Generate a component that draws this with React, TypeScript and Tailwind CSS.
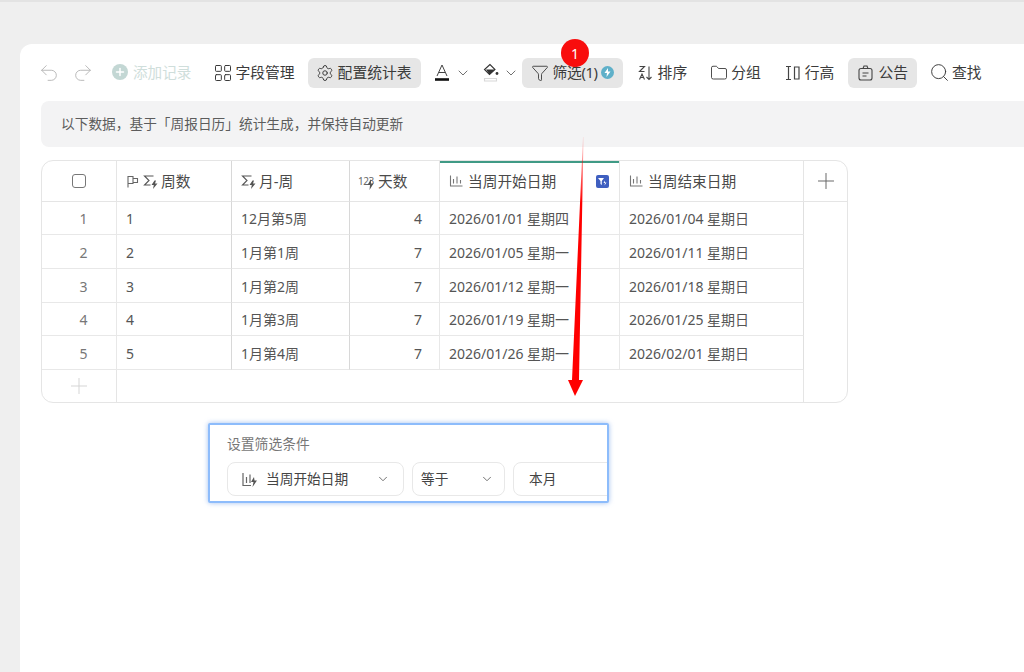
import { ChevronDown, Funnel, Folder, LayoutGrid, Plus, Redo2, Search, Settings, Undo2 } from "lucide-react";
import type { ReactNode } from "react";

const rows = [
  { id: 1, month: "12月第5周", days: 4, start: "2026/01/01 星期四", end: "2026/01/04 星期日" },
  { id: 2, month: "1月第1周", days: 7, start: "2026/01/05 星期一", end: "2026/01/11 星期日" },
  { id: 3, month: "1月第2周", days: 7, start: "2026/01/12 星期一", end: "2026/01/18 星期日" },
  { id: 4, month: "1月第3周", days: 7, start: "2026/01/19 星期一", end: "2026/01/25 星期日" },
  { id: 5, month: "1月第4周", days: 7, start: "2026/01/26 星期一", end: "2026/02/01 星期日" },
];

const SigmaBolt = () => (
  <svg className="shrink-0" width="15" height="15" viewBox="0 0 15 15" fill="none" stroke="#555" strokeWidth="1.1">
    <path d="M10.5 2H1.5L6 6.5 1.5 11H7.5" />
    <path d="M11.5 6.5 8.5 11h2.3L10 15 14.5 9.5H12l1-3z" fill="#555" stroke="none" />
  </svg>
);

const ChartIcon = () => (
  <svg className="shrink-0" width="14" height="14" viewBox="0 0 14 14" fill="none" stroke="#777" strokeWidth="1.1">
    <path d="M1.5 1.5v10.5h12M4.5 5v4.5M8 2.5v7M11.5 6v3.5" />
  </svg>
);

const IconBox = ({ children }: { children: ReactNode }) => (
  <span className="flex w-[15px] shrink-0 justify-center">{children}</span>
);

const ToolItem = ({ icon, label, active, className = "" }: { icon: ReactNode; label: ReactNode; active?: boolean; className?: string }) => (
  <div className={`flex h-[30px] shrink-0 items-center gap-[5px] whitespace-nowrap rounded-md pl-[10px] pr-[9px] text-[14.8px] text-[#3b3b3b] ${active ? "bg-[#e6e6e6]" : ""} ${className}`}>
    <IconBox>{icon}</IconBox>
    <span>{label}</span>
  </div>
);

const HeaderCell = ({ children, className = "" }: { children: ReactNode; className?: string }) => (
  <div className={`flex items-center border-b border-r border-[#e5e5e5] text-[14.7px] text-[#4a4a4a] ${className}`}>{children}</div>
);

const BodyCell = ({ children, className = "" }: { children: ReactNode; className?: string }) => (
  <div className={`flex items-center border-b border-r border-[#e8e8e8] pl-[9px] pt-px text-[14px] text-[#555] ${className}`}>{children}</div>
);

export default function App() {
  return (
    <div className="relative h-[672px] w-[1024px] overflow-hidden border-t-2 border-[#e3e3e3] bg-[#efefef] pt-[42px] pl-5 font-['Noto_Sans','Noto_Sans_CJK_SC',sans-serif]">
      <div className="h-[640px] rounded-tl-xl bg-white pl-[21px]">
        {/* toolbar */}
        <div className="flex h-[57px] items-center">
          <Undo2 size={22} strokeWidth={1} className="-ml-[3px] shrink-0 text-[#b4b4b4]" />
          <Redo2 size={22} strokeWidth={1} className="ml-[12px] shrink-0 text-[#b4b4b4]" />
          <div className="ml-[18px] flex items-center gap-[5px] text-[14.6px] text-[#cfdedb]">
            <span className="flex h-4 w-4 items-center justify-center rounded-full bg-[#c3d7d4]">
              <Plus size={12} strokeWidth={3} className="text-white" />
            </span>
            添加记录
          </div>
          <ToolItem className="ml-[14px]" icon={<LayoutGrid size={20} strokeWidth={1.2} className="shrink-0" />} label="字段管理" />
          <ToolItem className="ml-[4px] w-[113px] pr-0" active icon={<Settings size={18} strokeWidth={1.3} className="shrink-0" />} label="配置统计表" />
          <svg className="ml-[13px] shrink-0" width="16" height="20" viewBox="0 0 16 20" fill="none" stroke="#444" strokeWidth="1">
            <path d="M3 13 8 2l5 11M5 9.5h6" />
            <path d="M1 16.5h14" stroke="#111" strokeWidth="2.6" />
          </svg>
          <ChevronDown size={16} strokeWidth={1.4} className="ml-[5px] shrink-0 text-[#666]" />
          <svg className="ml-[12px] shrink-0" width="16" height="20" viewBox="0 0 16 20" fill="none" stroke="#333" strokeWidth="1.1">
            <path d="M7 1.5 1.5 6.5 6.5 11.5 12 6.5z" />
            <path d="M3 6.5h9L6.5 11.5z" fill="#333" stroke="none" />
            <circle cx="14" cy="10.5" r="1.4" fill="#333" stroke="none" />
            <path d="M1.5 15.5h12v2.5h-12z" stroke="#d8d8d8" />
          </svg>
          <ChevronDown size={16} strokeWidth={1.4} className="ml-[4px] shrink-0 text-[#666]" />
          <div className="ml-[3px] flex h-[30px] w-[101px] shrink-0 items-center whitespace-nowrap rounded-md bg-[#e6e6e6] pl-[11px] text-[14.8px] text-[#3b3b3b]">
            <IconBox>
              <Funnel size={18} strokeWidth={1.2} className="shrink-0" />
            </IconBox>
            <span className="ml-[5px] w-[46px] tracking-[-0.4px]">筛选(1)</span>
            <span className="ml-[2px] flex h-[13px] w-[13px] shrink-0 items-center justify-center rounded-full bg-[#5fb0c9]">
              <svg width="7" height="9" viewBox="0 0 7 9" fill="#fff">
                <path d="M4 0 .5 5H3L2.5 9 6.5 3.5H4z" />
              </svg>
            </span>
          </div>
          <ToolItem
            className="ml-[5px]"
            icon={
              <svg className="shrink-0" width="15" height="16" viewBox="0 0 15 16" fill="none" stroke="#444" strokeWidth="1.1">
                <path d="M1.5 1.5h5L1.5 6.5h5M1.5 14.5 4 9l2.5 5.5M2.5 12.5h3M11 1.5v13M8.5 12l2.5 2.5 2.5-2.5" />
              </svg>
            }
            label="排序"
          />
          <ToolItem className="ml-[5px]" icon={<Folder size={18} strokeWidth={1.2} className="shrink-0" />} label="分组" />
          <ToolItem
            className="ml-[5px]"
            icon={
              <svg className="shrink-0" width="15" height="16" viewBox="0 0 15 16" fill="none" stroke="#444" strokeWidth="1.2">
                <path d="M1 1.5h5M1 14.5h5M3.5 1.5v13M9.5 2h4.5v12H9.5z" />
              </svg>
            }
            label="行高"
          />
          <ToolItem
            className="ml-[5px]"
            active
            icon={
              <svg className="shrink-0" width="15" height="16" viewBox="0 0 15 16" fill="none" stroke="#444" strokeWidth="1.1">
                <rect x="1" y="3.5" width="13" height="11.5" rx="2" />
                <path d="M5 3.5 6 1h3l1 2.5M4.5 8h6M4.5 11h4" />
              </svg>
            }
            label="公告"
          />
          <ToolItem className="ml-[5px]" icon={<Search size={21} strokeWidth={1.1} className="shrink-0" />} label="查找" />
        </div>

        {/* notice */}
        <div className="flex h-[46px] items-center rounded-l-lg bg-[#f3f3f4] pl-5 text-[13.7px] text-[#5c5c5c]">
          以下数据，基于「周报日历」统计生成，并保持自动更新
        </div>

        {/* table */}
        <div className="mt-[13px] grid w-[807px] grid-cols-[75px_115px_118px_90px_180px_184px_44px] grid-rows-[41px_33px_34px_34px_33px_34px_32px] overflow-hidden rounded-xl border border-[#e5e5e5]">
          <HeaderCell className="justify-center">
            <span className="h-[14px] w-[14px] rounded-[3px] border border-[#777]" />
          </HeaderCell>
          <HeaderCell className="gap-[4px] border-r-[#d8d8d8] pl-[9px]">
            <svg className="shrink-0" width="13" height="13" viewBox="0 0 13 13" fill="none" stroke="#666" strokeWidth="1.1">
              <path d="M2 12.5V1.5h5v7H2M7 3.5h4.5v4H7" />
            </svg>
            <SigmaBolt />
            <span className="-ml-[1px]">周数</span>
          </HeaderCell>
          <HeaderCell className="gap-[3px] border-r-[#d8d8d8] pl-[9px]">
            <SigmaBolt />
            月-周
          </HeaderCell>
          <HeaderCell className="pl-[8px]">
            <span className="relative w-[20px] text-[10px] leading-none tracking-[-0.5px] text-[#666]">
              123
              <svg className="absolute top-[3px] left-[9px]" width="7" height="11" viewBox="0 0 7 11" fill="#555">
                <path d="M4 0 .5 6H3L2.5 11 6.5 4.5H4z" />
              </svg>
            </span>
            <span>天数</span>
          </HeaderCell>
          <HeaderCell className="relative justify-between pl-[9px] pr-[10px]">
            <span className="absolute top-0 left-0 h-[2px] w-full bg-[#3f9a85]" />
            <span className="flex items-center gap-[5px]">
              <ChartIcon />
              当周开始日期
            </span>
            <span className="flex h-[13px] w-[13px] items-center justify-center rounded-[2px] bg-[#3f5fc0]">
              <svg width="9" height="9" viewBox="0 0 9 9" fill="#fff">
                <path d="M0 1h6L3.8 4v4L2.5 7V4zM7 3.5 5.5 6H7l-.5 2.5L8.5 5.5H7z" />
              </svg>
            </span>
          </HeaderCell>
          <HeaderCell className="gap-[5px] pl-[9px]">
            <ChartIcon />
            当周结束日期
          </HeaderCell>
          <HeaderCell className="justify-center border-r-0">
            <Plus size={26} strokeWidth={0.9} className="shrink-0 text-[#666]" />
          </HeaderCell>

          {rows.map((r) => (
            <div key={r.id} className="contents">
              <BodyCell className="justify-center pl-0 pt-0 text-[#777]">{r.id}</BodyCell>
              <BodyCell className="border-r-[#d8d8d8]">{r.id}</BodyCell>
              <BodyCell className="border-r-[#d8d8d8]">{r.month}</BodyCell>
              <BodyCell className="justify-end pr-[17px]">{r.days}</BodyCell>
              <BodyCell>{r.start}</BodyCell>
              <BodyCell className="border-r-[#e0e0e0]">{r.end}</BodyCell>
              {r.id === 1 && <div className="row-span-6" />}
            </div>
          ))}
          <div className="flex items-center justify-center border-r border-[#e5e5e5]">
            <Plus size={26} strokeWidth={0.9} className="shrink-0 text-[#d4d4d4]" />
          </div>
          <div className="col-span-5 border-r border-[#e5e5e5]" />
        </div>

        {/* filter panel */}
        <div className="ml-[167px] mt-5 h-[80px] w-[401px] overflow-hidden rounded-[2px] border-2 border-[#8dbcfb] bg-white pl-[17px] pt-[9px] shadow-[0_0_5px_rgba(100,150,230,0.6)]">
          <div className="text-[13.8px] leading-[20px] text-[#777]">设置筛选条件</div>
          <div className="mt-[8px] flex gap-2 text-[13.7px] text-[#444]">
            <div className="flex h-[34px] w-[177px] shrink-0 items-center rounded-lg border border-[#e8e8e8] pl-[13px]">
              <svg className="shrink-0" width="17" height="17" viewBox="0 0 17 17" fill="none" stroke="#666" strokeWidth="1.2">
                <path d="M2 2v12.5h8M5.5 6v6M9 3.5V12" />
                <path d="M13 6 10 11h2.5L11.5 16 16 9.5h-2.5z" fill="#555" stroke="none" />
              </svg>
              <span className="ml-[8px]">当周开始日期</span>
              <ChevronDown size={14} strokeWidth={1.4} className="ml-[28px] shrink-0 text-[#555]" />
            </div>
            <div className="flex h-[34px] w-[93px] shrink-0 items-center rounded-lg border border-[#e8e8e8] pl-[8px]">
              等于
              <ChevronDown size={14} strokeWidth={1.4} className="ml-[32px] shrink-0 text-[#555]" />
            </div>
            <div className="flex h-[34px] w-[120px] shrink-0 items-center rounded-lg border border-[#e8e8e8] pl-[15px]">本月</div>
          </div>
        </div>
      </div>

      {/* step badge */}
      <div className="absolute left-[561px] top-[37px] flex h-7 w-7 items-center justify-center rounded-full bg-[#f80d0d] text-[14px] text-white">1</div>

      {/* arrow */}
      <svg className="pointer-events-none absolute left-[560px] top-[134px]" width="30" height="262" viewBox="0 0 30 262">
        <defs>
          <linearGradient id="arrowFade" x1="0" y1="0" x2="0" y2="1">
            <stop offset="0" stopColor="#ff0000" stopOpacity="0.1" />
            <stop offset="0.25" stopColor="#ff0000" />
          </linearGradient>
        </defs>
        <path d="M23 1 23.5 1 19 244 23 244 15 260 8 244 12 244z" fill="url(#arrowFade)" />
      </svg>
    </div>
  );
}
